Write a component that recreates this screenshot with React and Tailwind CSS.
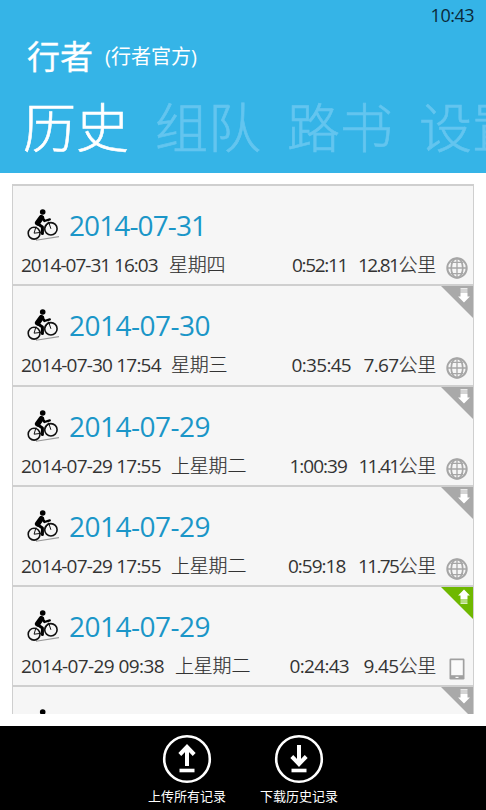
import React from 'react';

const pivots = ['历史', '组队', '路书', '设置'];

const records = [
  { title: '2014-07-31', titleTrack: 'tracking-[-0.9px]', start: '2014-07-31 16:03', startWidth: 'w-[148px]', startTrack: 'tracking-[-1px]', day: '星期四', time: '0:52:11', timeWidth: 'w-[66px]', timeTrack: 'tracking-[-1.3px]', km: '12.81', kmTrack: 'tracking-[-1.6px]', source: 'web' },
  { title: '2014-07-30', titleTrack: 'tracking-[-0.5px]', start: '2014-07-30 17:54', startWidth: 'w-[150px]', startTrack: 'tracking-[-0.8px]', day: '星期三', time: '0:35:45', timeWidth: 'w-[72px]', timeTrack: 'tracking-[-0.7px]', km: '7.67', kmTrack: 'tracking-[-0.7px]', source: 'web', sync: 'down' },
  { title: '2014-07-29', titleTrack: 'tracking-[-0.5px]', start: '2014-07-29 17:55', startWidth: 'w-[150px]', startTrack: 'tracking-[-0.8px]', day: '上星期二', time: '1:00:39', timeWidth: 'w-[69px]', timeTrack: 'tracking-[-1px]', km: '11.41', kmTrack: 'tracking-[-1.7px]', source: 'web', sync: 'down' },
  { title: '2014-07-29', titleTrack: 'tracking-[-0.5px]', start: '2014-07-29 17:55', startWidth: 'w-[150px]', startTrack: 'tracking-[-0.8px]', day: '上星期二', time: '0:59:18', timeWidth: 'w-[70px]', timeTrack: 'tracking-[-1px]', km: '11.75', kmTrack: 'tracking-[-1.6px]', source: 'web', sync: 'down' },
  { title: '2014-07-29', titleTrack: 'tracking-[-0.5px]', start: '2014-07-29 09:38', startWidth: 'w-[154px]', startTrack: 'tracking-[-0.6px]', day: '上星期二', time: '0:24:43', timeWidth: 'w-[74px]', timeTrack: 'tracking-[-0.7px]', km: '9.45', kmTrack: 'tracking-[-0.7px]', source: 'phone', sync: 'up' },
];

function RiderIcon() {
  return (
    <svg className="w-8 h-8 shrink-0" viewBox="0 0 32 32" fill="none" stroke="#111">
      <path d="M9 31.2 32 27.6" stroke="#999" strokeWidth="1.1" />
      <circle cx="7.1" cy="24.2" r="5.9" strokeWidth="1.6" />
      <circle cx="23.9" cy="19.8" r="6.2" strokeWidth="1.6" />
      <circle cx="15.7" cy="3" r="2.8" fill="#000" stroke="none" />
      <g stroke="#000" strokeLinecap="round" strokeLinejoin="round">
        <path d="M14.4 8.6 10.6 13.8" strokeWidth="5.4" />
        <path d="M15.6 8.2 17.4 12 22.8 10.4" strokeWidth="2.3" />
        <path d="M10.4 14.6 15.4 18 15.4 24.4" strokeWidth="3" />
      </g>
      <path d="M7.1 24.2 9 17.5M7.1 24.2l8.3-1M15.4 23.2l6.2-10.4 2.3 7" strokeWidth="1" />
    </svg>
  );
}

function GlobeIcon() {
  return (
    <svg className="w-[22px] h-[22px]" viewBox="0 0 22 22" fill="none" stroke="#a6a6a6" strokeWidth="1.7">
      <circle cx="11" cy="11" r="9.7" strokeWidth="2" />
      <ellipse cx="11" cy="11" rx="5.8" ry="9.7" />
      <path d="M11 1v20M1 11h20M4.5 5.4h13M4.5 16.6h13" strokeWidth="1.3" />
    </svg>
  );
}

function PhoneIcon() {
  return (
    <svg className="w-[22px] h-[22px]" viewBox="0 0 22 22">
      <rect x="3.5" y="0.5" width="15" height="21" rx="1.2" fill="#a0a0a0" />
      <rect x="5.2" y="2.2" width="11.6" height="15" fill="#fafafa" />
      <rect x="9.5" y="18.8" width="3" height="1.2" fill="#fafafa" />
    </svg>
  );
}

function SyncCorner({ direction }) {
  const up = direction === 'up';
  return (
    <svg className="absolute top-0 right-0 w-8 h-8" viewBox="0 0 32 32">
      <path d="M0 0H32V32Z" fill={up ? '#6fb800' : '#a9a9a9'} />
      <g fill="#fff" transform={up ? 'matrix(1 0 0 -1 0 19)' : undefined}>
        <path d="M19.5 2.2h7v1.2h-7zM19.5 4.4h7v1.2h-7zM19.5 6.4h7V10.5h2.4l-5.9 6-5.9-6H19.5z" />
      </g>
    </svg>
  );
}

function RecordRow({ record }) {
  return (
    <div className="relative h-[100.3px] shrink-0 border-t-2 border-[#cfcfcf]">
      {record.sync && <SyncCorner direction={record.sync} />}
      <div className="flex items-center h-[52px] mt-[13px] pl-[14px]">
        <RiderIcon />
        <span className={`ml-[10px] text-[28px] leading-none text-[#1b96c8] ${record.titleTrack}`}>{record.title}</span>
      </div>
      <div className="flex items-center h-7 pl-[8px] pr-[5px] whitespace-nowrap text-[19px] leading-7 text-[#333]">
        <span className={`${record.startWidth} ${record.startTrack}`}>{record.start}</span>
        <span className="font-light tracking-[-0.2px] [-webkit-text-stroke:0.2px]">{record.day}</span>
        <span className={`ml-auto ${record.timeWidth} ${record.timeTrack}`}>{record.time}</span>
        <span className={record.kmTrack}>{record.km}</span>
        <span className="font-light tracking-[-0.2px] [-webkit-text-stroke:0.2px]">公里</span>
        <span className="ml-[10px] mt-[6px]">{record.source === 'web' ? <GlobeIcon /> : <PhoneIcon />}</span>
      </div>
    </div>
  );
}

function BarButton({ label, up }) {
  return (
    <div className="w-[112px] flex flex-col items-center">
      <svg className="w-[50px] h-[50px]" viewBox="0 0 50 50" fill="none" stroke="#fff">
        <circle cx="25" cy="25" r="22.8" strokeWidth="2.6" />
        <path d={up ? 'M25 32V13M17.8 20.5 25 13l7.2 7.5' : 'M25 11v19M17.8 22.5 25 30l7.2-7.5'} strokeWidth="4" />
        <path d="M17.5 36.5h15" strokeWidth="3.6" />
      </svg>
      <span className="mt-[3px] text-[13px] leading-[18px] text-white">{label}</span>
    </div>
  );
}

export default function App() {
  return (
    <div className="w-[486px] h-[810px] flex flex-col overflow-hidden bg-white font-['Open_Sans','Noto_Sans_CJK_SC',sans-serif]">
      <header className="h-[173px] shrink-0 bg-[#35b4e7] text-white overflow-hidden">
        <div className="h-[30px] pr-[12px] text-right text-[18px] leading-[31px] tracking-[-0.5px] text-[#0b2a3a]">10:43</div>
        <div className="flex items-center h-[52px] pl-[27px]">
          <h1 className="text-[33px] leading-none [-webkit-text-stroke:0.3px]">行者</h1>
          <span className="ml-[12px] mt-[2px] text-[20px] leading-none">(行者官方)</span>
        </div>
        <nav className="flex gap-[26px] pl-[23px] h-[90px] whitespace-nowrap text-[53px] leading-[92px] font-light [-webkit-text-stroke:0.6px]">
          {pivots.map((name, i) => (
            <span key={name} className={i === 0 ? 'text-white' : 'text-[#63c5ef]'}>{name}</span>
          ))}
        </nav>
      </header>
      <main className="mt-[11px] mx-3 h-[530px] shrink-0 flex flex-col overflow-hidden bg-[#f6f6f6] border-x border-[#cfcfcf]">
        {records.map((record, i) => (
          <RecordRow key={i} record={record} />
        ))}
        <div className="relative h-[100px] shrink-0 border-t-2 border-[#cfcfcf] pt-[22px] pl-[14px]">
          <SyncCorner direction="down" />
          <RiderIcon />
        </div>
      </main>
      <footer className="mt-auto h-[84px] shrink-0 flex bg-black pl-[131px] pt-[8px]">
        <BarButton label="上传所有记录" up />
        <BarButton label="下载历史记录" />
      </footer>
    </div>
  );
}
